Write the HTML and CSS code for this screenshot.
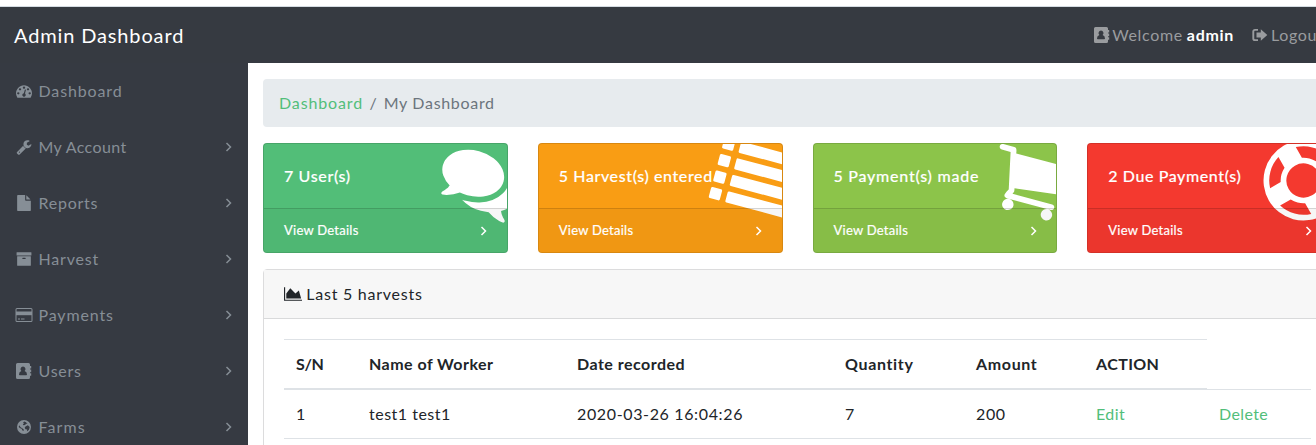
FILE: index.html
```html
<!DOCTYPE html>
<html lang="en">
<head>
<meta charset="utf-8">
<title>Admin Dashboard</title>
<link rel="stylesheet" href="styles.css">
</head>
<body>
<svg class="defs" aria-hidden="true">
  <symbol id="angle" viewBox="0 0 10 16"><path d="M2.5 4l4 4-4 4" fill="none" stroke="currentColor" stroke-width="1.5"/></symbol>
  <symbol id="book" viewBox="0 0 18 18"><path fill-rule="evenodd" d="M2.5 1h11Q15 1 15 2.5V4h1.2v2.6H15v1h1.2v2.6H15v1h1.2v2.6H15v1.7q0 1.500-1.500 1.500h-11Q1 17 1 15.500v-13Q1 1 2.500 1zM8 4.500a2.500 2.500 0 0 0-1.600 4.400Q4 9.500 4 12.500q0 .8.800.8h6.400q.8 0 .8-.8 0-3-2.400-3.600A2.500 2.500 0 0 0 8 4.500z"/></symbol>
</svg>
<div class="page">
  <header class="navbar">
    <a class="brand">Admin Dashboard</a>
    <nav class="account">
      <a class="account-link"><svg class="book"><use href="#book"/></svg><span class="t-welcome">Welcome</span><b>admin</b></a>
      <a class="account-link"><svg class="signout" viewBox="0 0 16 14"><path d="M6 1.900H3Q1.300 1.900 1.300 3.600v6.800q0 1.700 1.700 1.700h3" fill="none" stroke="currentColor" stroke-width="1.900"/><path d="M4.500 4.600h4.300V1.300L15.300 7l-6.500 5.700V9.400H4.500z"/></svg><span class="t-welcome">Logout</span></a>
    </nav>
  </header>
  <div class="wrapper">
    <ul class="sidebar">
      <li><svg class="icon" viewBox="0 0 1792 1792"><path d="M384 1152q0-53-37.500-90.500t-90.500-37.500-90.500 37.500-37.500 90.500 37.500 90.500 90.500 37.500 90.500-37.500 37.500-90.500zm192-448q0-53-37.500-90.500t-90.500-37.500-90.500 37.500-37.500 90.500 37.500 90.500 90.500 37.500 90.500-37.500 37.500-90.500zm428 481l101-382q6-26-7.500-48.500t-38.500-29.500-48 6.500-30 39.500l-101 382q-60 5-107 43.500t-63 98.500q-20 77 20 146t117 89 146-20 89-117q16-60-6-117t-72-91zm660-33q0-53-37.500-90.500t-90.500-37.500-90.500 37.500-37.500 90.500 37.500 90.500 90.500 37.500 90.500-37.500 37.500-90.500zm-640-640q0-53-37.500-90.500t-90.500-37.500-90.500 37.500-37.500 90.500 37.500 90.500 90.500 37.500 90.500-37.500 37.500-90.500zm448 192q0-53-37.500-90.500t-90.500-37.500-90.500 37.500-37.500 90.500 37.500 90.500 90.500 37.500 90.500-37.500 37.500-90.500zm320 448q0 261-141 483-19 29-54 29h-1402q-35 0-54-29-141-221-141-483 0-182 71-348t191-286 286-191 348-71 348 71 286 191 191 286 71 348z"/></svg><span class="t-dash">Dashboard</span></li>
      <li><svg class="icon" viewBox="0 0 1792 1792"><path d="M448 1472q0-26-19-45t-45-19-45 19-19 45 19 45 45 19 45-19 19-45zm644-420l-682 682q-37 37-90 37-52 0-91-37l-106-108q-38-36-38-90 0-53 38-91l681-681q39 98 114.500 173.500t173.500 114.500zm634-435q0 39-23 106-47 134-164.500 217.500t-258.500 83.500q-185 0-316.500-131.500t-131.500-316.500 131.500-316.500 316.500-131.500q58 0 121.500 16.500t107.500 46.500q16 11 16 28t-16 28l-293 169v224l193 107q5-3 79-48.500t135.500-81 70.500-35.500q15 0 23.500 10t8.500 25z"/></svg><span class="t-account">My Account</span><svg class="angle"><use href="#angle"/></svg></li>
      <li><svg class="icon" viewBox="0 0 1792 1792"><path d="M1152 512v-472q22 14 36 28l408 408q14 14 28 36h-472zm-128 32q0 40 28 68t68 28h544v1056q0 40-28 68t-68 28h-1344q-40 0-68-28t-28-68v-1600q0-40 28-68t68-28h800v544z"/></svg><span class="t-reports">Reports</span><svg class="angle"><use href="#angle"/></svg></li>
      <li><svg class="icon" viewBox="0 0 1792 1792"><path d="M1088 832q0-26-19-45t-45-19h-256q-26 0-45 19t-19 45 19 45 45 19h256q26 0 45-19t19-45zm576-192v960q0 26-19 45t-45 19h-1408q-26 0-45-19t-19-45v-960q0-26 19-45t45-19h1408q26 0 45 19t19 45zm64-448v256q0 26-19 45t-45 19h-1536q-26 0-45-19t-19-45v-256q0-26 19-45t45-19h1536q26 0 45 19t19 45z"/></svg><span class="t-harvest">Harvest</span><svg class="angle"><use href="#angle"/></svg></li>
      <li><svg class="icon wide" viewBox="0 0 18 16"><path fill-rule="evenodd" d="M2 1h14q1.500 0 1.500 1.500v11q0 1.500-1.500 1.500H2Q.5 15 .5 13.500v-11Q.5 1 2 1zm0 1q-.5 0-.5.500V5h15V2.500q0-.5-.5-.5zM1.500 8v5.500q0 .5.500.5h14q.5 0 .5-.5V8zM3 11.500h2v1H3zm3 0h3.500v1H6z"/><path d="M1 4.500h16v3.700H1z"/></svg><span class="t-payments">Payments</span><svg class="angle"><use href="#angle"/></svg></li>
      <li><svg class="icon wide"><use href="#book"/></svg><span class="t-users">Users</span><svg class="angle"><use href="#angle"/></svg></li>
      <li><svg class="icon" viewBox="0 0 16 16"><path fill-rule="evenodd" d="M8 1a7 7 0 1 1 0 14A7 7 0 0 1 8 1zM10 3.200L8.300 2.600 7 3.500l1 .8L6.800 5.400 7.500 6.300 9 6l1.200-1.300L11.500 5zM11.800 6.200L9.500 7.400 8.700 8.800 9.500 10.200l1.700.3-.3 2L13 10.800 13.700 8zM3.200 6.200L2.700 8l1.500 1.200 1.500.5.500 1.500 1.300.9.300-1.500L6.200 9.200 4.600 8.200z"/></svg><span class="t-farms">Farms</span><svg class="angle"><use href="#angle"/></svg></li>
    </ul>
    <main class="content">
      <div class="breadcrumb"><a class="t-dash">Dashboard</a><span class="slash">/</span><span class="t-my">My Dashboard</span></div>
      <div class="cards">
        <section class="card green">
          <svg class="art" viewBox="0 0 243 108"><path transform="translate(216 37) rotate(15) scale(.04464) translate(-896 -896)" d="M1408 768q0 139-94 257t-256.500 186.500-353.500 68.500q-86 0-176-16-124 88-278 128-36 9-86 16h-3q-11 0-20.500-8t-11.500-21q-1-3-1-6.500t.5-6.500 2-6l2.500-5 3.500-5.500 4-5 4.500-5 4-4.500q5-6 23-25t26-29.500 22.500-29 25-38.500 20.500-44q-124-72-195-177t-71-224q0-139 94-257t256.500-186.500 353.500-68.500 353.500 68.500 256.500 186.500 94 257zm384 256q0 120-71 224.500t-195 176.500q10 24 20.500 44t25 38.500 22.500 29 26 29.500 23 25q1 1 4 4.500t4.500 5 4 5 3.500 5.500l2.500 5 2 6 .5 6.500-1 6.500q-3 14-13 22t-22 7q-50-7-86-16-154-40-278-128-90 16-176 16-271 0-472-132 58 4 88 4 161 0 309-45t264-129q125-92 192-212t67-254q0-77-23-152 129 71 204 178t75 230z"/></svg>
          <div class="card-body"><span class="c1">7 User(s)</span></div>
          <a class="card-footer"><span>View Details</span><svg class="angle"><use href="#angle"/></svg></a>
        </section>
        <section class="card orange">
          <svg class="art" viewBox="0 0 243 108"><g transform="translate(215.500 36.500) rotate(15) scale(.04464) translate(-896 -896)"><rect y="128" width="256" height="256" rx="32"/><rect y="512" width="256" height="256" rx="32"/><rect y="896" width="256" height="256" rx="32"/><rect y="1280" width="256" height="256" rx="32"/><rect x="384" y="128" width="1408" height="256" rx="32"/><rect x="384" y="512" width="1408" height="256" rx="32"/><rect x="384" y="896" width="1408" height="256" rx="32"/><rect x="384" y="1280" width="1408" height="256" rx="32"/></g></svg>
          <div class="card-body"><span class="c2">5 Harvest(s) entered</span></div>
          <a class="card-footer"><span>View Details</span><svg class="angle"><use href="#angle"/></svg></a>
        </section>
        <section class="card lime">
          <svg class="art" viewBox="0 0 243 108"><path transform="translate(215 36.500) rotate(15) scale(.04464) translate(-896 -896)" d="M704 1536q0 52-38 90t-90 38-90-38-38-90 38-90 90-38 90 38 38 90zm896 0q0 52-38 90t-90 38-90-38-38-90 38-90 90-38 90 38 38 90zm128-1088v512q0 24-16.500 42.500t-40.500 21.500l-1044 122q13 60 13 70 0 16-24 64h920q26 0 45 19t19 45-19 45-45 19h-1024q-26 0-45-19t-19-45q0-11 8-31.500t16-36 21.500-40 15.500-29.500l-177-823h-204q-26 0-45-19t-19-45 19-45 45-19h256q16 0 28.500 6.500t19.500 15.500 13 24.500 8 26 5.500 29.500 4.500 26h1201q26 0 45 19t19 45z"/></svg>
          <div class="card-body"><span class="c3">5 Payment(s) made</span></div>
          <a class="card-footer"><span>View Details</span><svg class="angle"><use href="#angle"/></svg></a>
        </section>
        <section class="card red">
          <svg class="art" viewBox="0 0 243 108"><path transform="translate(215.500 36.500) rotate(15) scale(.04464) translate(-896 -896)" d="M896 0q182 0 348 71t286 191 191 286 71 348-71 348-191 286-286 191-348 71-348-71-286-191-191-286-71-348 71-348 191-286 286-191 348-71zm0 128q-190 0-361 90l194 194q82-28 167-28t167 28l194-194q-171-90-361-90zm-678 1129l194-194q-28-82-28-167t28-167l-194-194q-90 171-90 361t90 361zm678 407q190 0 361-90l-194-194q-82 28-167 28t-167-28l-194 194q171 90 361 90zm0-384q159 0 271.500-112.500t112.500-271.500-112.500-271.500-271.500-112.500-271.500 112.500-112.500 271.500 112.500 271.500 271.500 112.500zm484-217l194 194q90-171 90-361t-90-361l-194 194q28 82 28 167t-28 167z"/></svg>
          <div class="card-body"><span class="c4">2 Due Payment(s)</span></div>
          <a class="card-footer"><span>View Details</span><svg class="angle"><use href="#angle"/></svg></a>
        </section>
      </div>
      <section class="panel">
        <div class="panel-head"><svg class="chart" viewBox="0 0 2048 1792"><path d="M2048 1536v128h-2048v-1536h128v1408h1920zm-384-1024l256 896h-1664v-576l448-576 576 576z"/></svg><span class="t-last">Last 5 harvests</span></div>
        <div class="panel-body">
          <table>
            <colgroup><col class="w1"><col class="w2"><col class="w3"><col class="w4"><col class="w5"><col class="w6"><col class="w7"></colgroup>
            <thead><tr><th><span class="h1">S/N</span></th><th><span class="h2">Name of Worker</span></th><th><span class="h3">Date recorded</span></th><th><span class="h4">Quantity</span></th><th><span class="h5">Amount</span></th><th>ACTION</th></tr></thead>
            <tbody>
              <tr><td>1</td><td><span class="d2">test1 test1</span></td><td><span class="d3">2020-03-26 16:04:26</span></td><td>7</td><td><span class="d5">200</span></td><td><a>Edit</a></td><td><a>Delete</a></td></tr>
              <tr><td></td><td></td><td></td><td></td><td></td><td></td><td></td></tr>
            </tbody>
          </table>
        </div>
      </section>
    </main>
  </div>
</div>
</body>
</html>
```
FILE: styles.css
```css
* { box-sizing: border-box; }
html, body { height: 445px; overflow: hidden; }
body { margin: 0; background: #fff; color: #212529; font: 16px/24px Lato, "Open Sans", sans-serif; letter-spacing: .4px; }
svg { fill: currentColor; flex: none; }
.defs { display: none; }
.page { width: 1347px; height: 445px; padding-top: 6px; overflow: hidden; }
.navbar { display: flex; justify-content: space-between; align-items: center; height: 57px; padding: 0 23.5px 0 14px; background: #363a41; border-top: 1px solid #d5dce2; }
.brand { color: #fff; font-size: 20px; letter-spacing: .86px; }
.account { display: flex; color: #9a9c9f; }
.account-link { display: flex; align-items: center; }
.account-link + .account-link { margin-left: 18px; }
.account b { color: #fff; margin-left: 4px; letter-spacing: .7px; }
.book { width: 18px; height: 18px; margin-right: 1px; }
.signout { width: 16px; height: 14px; margin-right: 3px; }
.wrapper { display: flex; height: 382px; overflow: hidden; }
.sidebar { width: 248px; height: 382px; overflow: hidden; margin: 0; padding: 0; list-style: none; background: #363a42; color: #868e96; flex: none; }
.sidebar li { display: flex; align-items: center; height: 56px; padding: 0 14px 0 16px; }
.icon { width: 16px; height: 16px; margin-right: 6.5px; }
.wide { width: 18px; height: 18px; margin: 0 5.5px 0 -1px; }
.angle { width: 10px; height: 16px; margin-left: auto; }
.t-dash { letter-spacing: .87px; }
.t-account { letter-spacing: .38px; }
.t-reports { letter-spacing: .75px; }
.t-harvest { letter-spacing: .8px; }
.t-farms { letter-spacing: 1.100px; }
.t-payments { letter-spacing: .85px; }
.t-users { letter-spacing: .75px; }
.t-welcome { letter-spacing: .65px; }
.t-my { letter-spacing: .68px; }
.t-last { letter-spacing: .75px; }
.content { flex: 1; padding: 16px 15px 0; min-width: 0; }
.breadcrumb { display: flex; height: 48px; padding: 12px 16px; background: #e7ebee; border-radius: 4px; color: #6c757d; }
.breadcrumb a, td a { color: #52be7a; }
.slash { margin: 0 6.5px; }
.cards { display: grid; grid-template-columns: repeat(4, 1fr); gap: 30px; margin: 16px 0; }
.card { position: relative; height: 110px; border: 1px solid rgba(0,0,0,.13); border-radius: 4px; color: #fff; overflow: hidden; }
.green { background-color: #52be78; }
.orange { background-color: #f99d14; }
.lime { background-color: #8cc44a; }
.red { background-color: #f4392f; }
.art { position: absolute; top: 0; left: 0; width: 243px; height: 108px; }
.card-body { position: relative; height: 64px; padding: 20px; white-space: nowrap; -webkit-text-stroke: .15px; font-weight: 500; }
.c1 { letter-spacing: .65px; }
.c2, .c4 { letter-spacing: .6px; }
.c3 { letter-spacing: .76px; }
.card-footer { position: relative; display: flex; align-items: center; height: 44px; padding: 0 17.5px 2px 20px; background: rgba(0,0,0,.035); border-top: 1px solid rgba(0,0,0,.14); font-size: 13px; letter-spacing: .25px; -webkit-text-stroke: .2px; }
.card-footer .angle { position: relative; top: 1px; }
.panel { height: 240px; border: 1px solid #dcdcdd; border-radius: 4px; }
.panel-head { display: flex; align-items: center; height: 49px; padding: 0 20px; background: #f7f7f7; border-bottom: 1px solid #d9dadb; }
.chart { width: 18.3px; height: 16px; margin-right: 4px; }
.panel-body { padding: 20px; }
table { width: 1027px; table-layout: fixed; border-collapse: collapse; }
th, td { padding: 12px; text-align: left; border-top: 1px solid #dee2e6; white-space: nowrap; }
th { border-bottom: 2px solid #dee2e6; }
.w1 { width: 73px; } .w2 { width: 208px; } .w3 { width: 268px; } .w4 { width: 131px; } .w5 { width: 120px; } .w6 { width: 123px; } .w7 { width: 104px; }
.h1 { letter-spacing: -.4px; }
.h2 { letter-spacing: .47px; }
.h3 { letter-spacing: .48px; }
.h4 { letter-spacing: .65px; }
.h5 { letter-spacing: .65px; }
.d2 { letter-spacing: .5px; }
.d3 { letter-spacing: .64px; }
.d5 { letter-spacing: .6px; }
```
